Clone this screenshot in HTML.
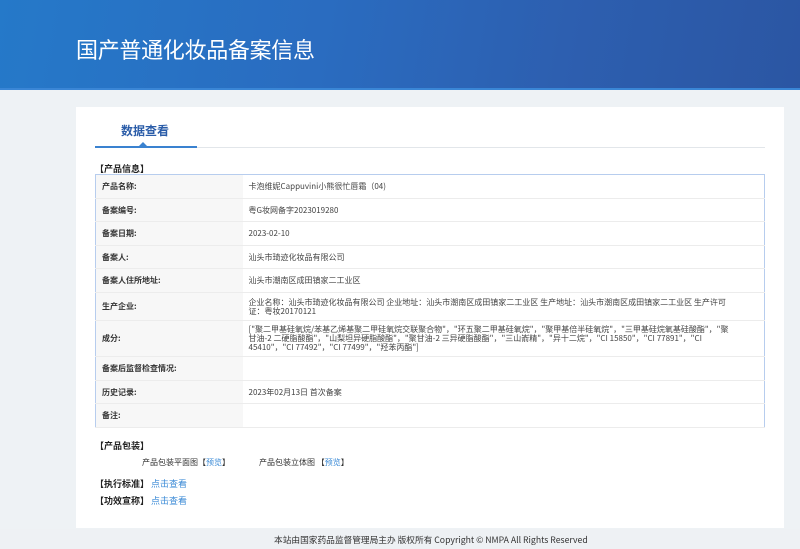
<!DOCTYPE html>
<html><head><meta charset="utf-8"><style>
*{margin:0;padding:0;box-sizing:border-box}
body{width:800px;height:549px;overflow:hidden;background:#eef2f5;font-family:"Liberation Sans","Noto Sans CJK SC",sans-serif;position:relative;color:#333}
.hd{position:absolute;left:0;top:0;width:800px;height:90px;background:linear-gradient(100deg,#2579c9 0%,#2a6cc0 40%,#2d5fb0 70%,#2b56a3 100%);overflow:hidden}
.hd:after{content:"";position:absolute;left:0;bottom:0;width:800px;height:2px;background:#3a86d6}
.hd h1{position:absolute;left:76px;top:33px;font-size:22px;font-weight:normal;color:#fff;font-family:"Noto Sans CJK SC",sans-serif;letter-spacing:-0.3px}
.card{position:absolute;left:76px;top:107px;width:708px;height:421px;background:#fff}
.tab{position:absolute;left:121px;top:122px;font-size:12px;font-weight:bold;color:#2a5ca8;font-family:"Noto Sans CJK SC",sans-serif}
.line{position:absolute;left:95px;top:147px;width:670px;height:1px;background:#e2e6ea}
.uline{position:absolute;left:95px;top:146px;width:102px;height:2px;background:#3a82d0}
.tri{position:absolute;left:139px;top:142px;width:0;height:0;border-left:4px solid transparent;border-right:4px solid transparent;border-bottom:4px solid #3a82d0}
.sec{position:absolute;font-size:9px;font-weight:bold;color:#222;font-family:"Noto Sans CJK SC",sans-serif}
table{position:absolute;left:95px;top:174px;width:670px;border-collapse:collapse;border:1px solid #b7cdee;font-size:8px;font-family:"Noto Sans CJK SC",sans-serif}
td{border-bottom:1px solid #ececec;vertical-align:middle;line-height:9px}
td.l{width:147px;background:#f7f7f7;font-weight:bold;padding-left:6px;color:#333}
td.v{padding-left:6px;color:#444;padding-right:30px}
.t{position:absolute;font-size:8px;color:#333;font-family:"Noto Sans CJK SC",sans-serif}
a{color:#3a8ad6;text-decoration:none}
.ft{position:absolute;left:0;top:529px;width:800px;height:20px;background:#eef1f4;font-size:8.7px;color:#333;font-family:"Noto Sans CJK SC",sans-serif}
.ft span{position:absolute;left:274px;top:4px}
</style></head><body>
<div class="hd"><h1>国产普通化妆品备案信息</h1></div>
<div class="card"></div>
<div class="tab">数据查看</div>
<div class="line"></div><div class="uline"></div><div class="tri"></div>
<div class="sec" style="left:95px;top:162px">【产品信息】</div>
<table>
<tr style="height:24px"><td class="l">产品名称:</td><td class="v">卡泡维妮Cappuvini小熊很忙唇霜（04)</td></tr>
<tr style="height:23px"><td class="l">备案编号:</td><td class="v">粤G妆网备字2023019280</td></tr>
<tr style="height:24px"><td class="l">备案日期:</td><td class="v">2023-02-10</td></tr>
<tr style="height:23px"><td class="l">备案人:</td><td class="v">汕头市琦迹化妆品有限公司</td></tr>
<tr style="height:24px"><td class="l">备案人住所地址:</td><td class="v">汕头市潮南区成田镇家二工业区</td></tr>
<tr style="height:28px"><td class="l">生产企业:</td><td class="v">企业名称：汕头市琦迹化妆品有限公司 企业地址：汕头市潮南区成田镇家二工业区 生产地址：汕头市潮南区成田镇家二工业区 生产许可证：粤妆20170121</td></tr>
<tr style="height:36px"><td class="l">成分:</td><td class="v">["聚二甲基硅氧烷/苯基乙烯基聚二甲硅氧烷交联聚合物"，"环五聚二甲基硅氧烷"，"聚甲基倍半硅氧烷"，"三甲基硅烷氧基硅酸酯"，"聚甘油-2 二硬脂酸酯"，"山梨坦异硬脂酸酯"，"聚甘油-2 三异硬脂酸酯"，"三山嵛精"，"异十二烷"，"CI 15850"，"CI 77891"，"CI 45410"，"CI 77492"，"CI 77499"，"羟苯丙酯"]</td></tr>
<tr style="height:24px"><td class="l">备案后监督检查情况:</td><td class="v"></td></tr>
<tr style="height:23px"><td class="l">历史记录:</td><td class="v">2023年02月13日 首次备案</td></tr>
<tr style="height:24px"><td class="l">备注:</td><td class="v"></td></tr>
</table>
<div class="sec" style="left:95px;top:439px">【产品包装】</div>
<div class="t" style="left:142px;top:457px">产品包装平面图【<a>预览</a>】</div>
<div class="t" style="left:259px;top:457px">产品包装立体图 【<a>预览</a>】</div>
<div class="sec" style="left:95px;top:477px">【执行标准】 <a style="font-weight:normal">点击查看</a></div>
<div class="sec" style="left:95px;top:494px">【功效宣称】 <a style="font-weight:normal">点击查看</a></div>
<div class="ft"><span>本站由国家药品监督管理局主办 版权所有 Copyright © NMPA All Rights Reserved</span></div>
</body></html>
